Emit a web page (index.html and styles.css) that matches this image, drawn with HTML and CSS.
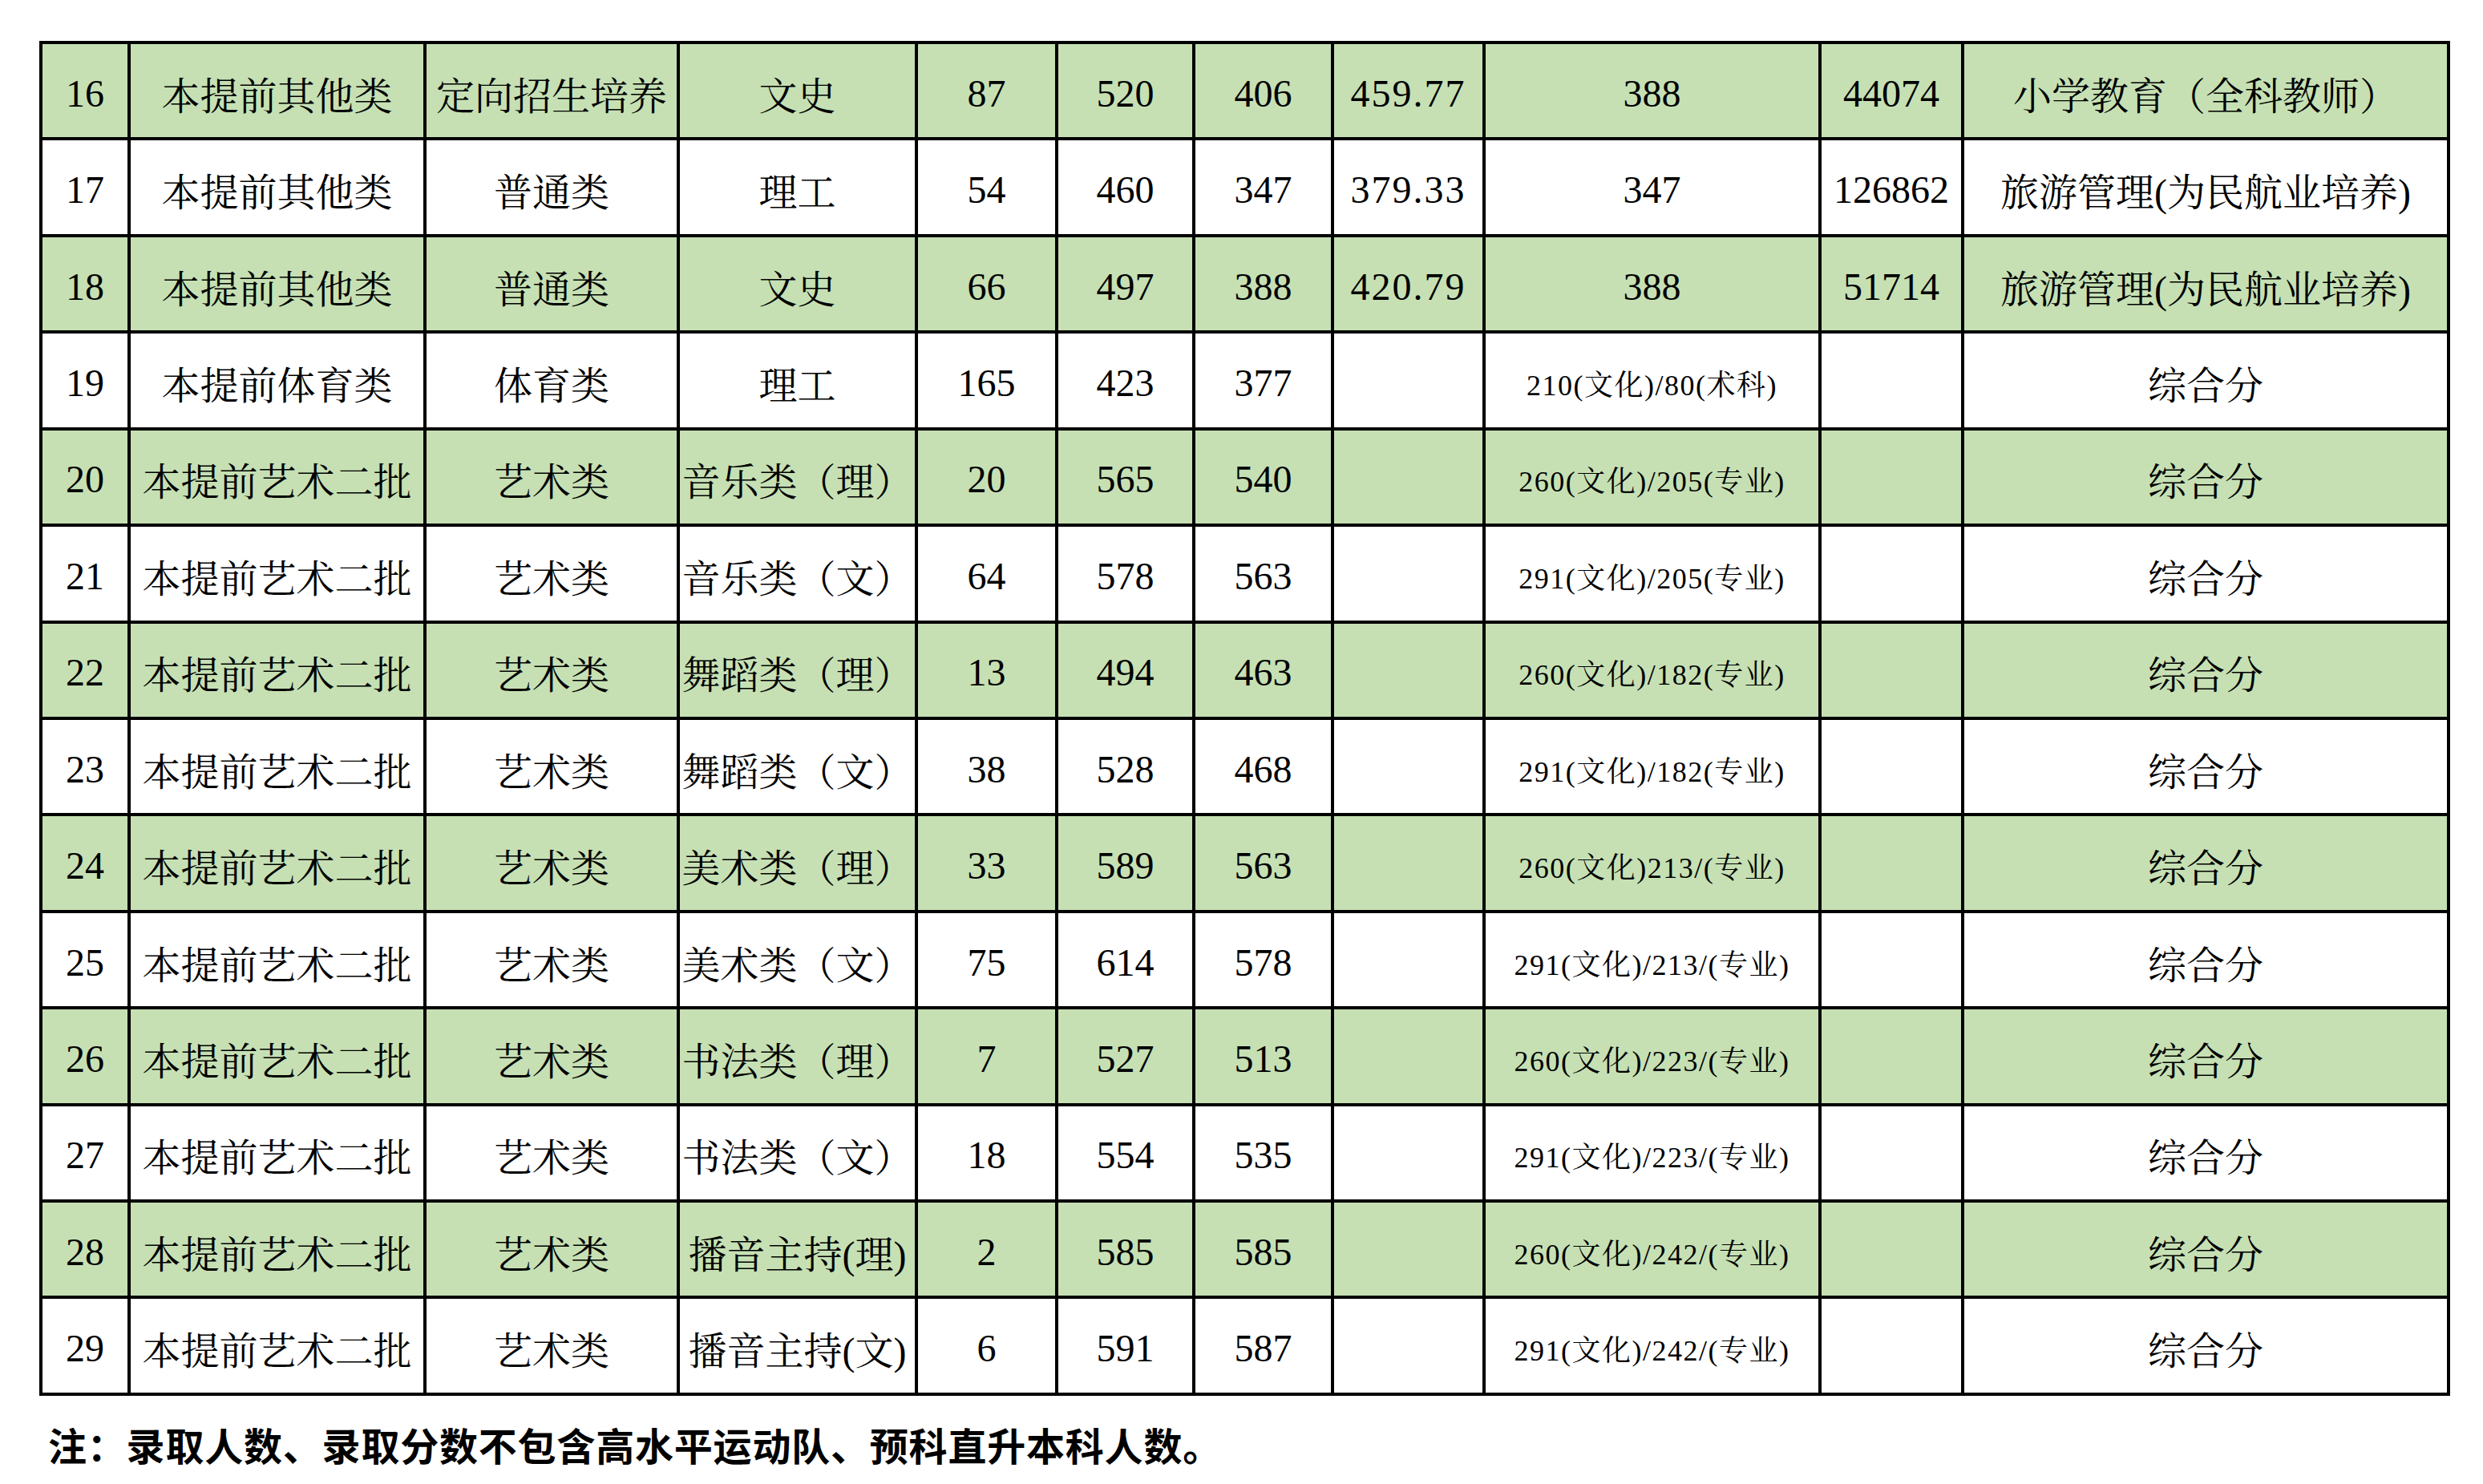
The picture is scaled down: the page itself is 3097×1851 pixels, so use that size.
FILE: index.html
```html
<!DOCTYPE html>
<html lang="zh-CN">
<head>
<meta charset="utf-8">
<title>录取情况</title>
<link rel="stylesheet" href="styles.css">
</head>
<body>
<div class="page">
  <div class="sheet">
    <div class="row green">
      <div class="cell">16</div><div class="cell">本提前其他类</div><div class="cell">定向招生培养</div><div class="cell">文史</div><div class="cell">87</div><div class="cell">520</div><div class="cell">406</div><div class="cell dec">459.77</div><div class="cell">388</div><div class="cell">44074</div><div class="cell">小学教育（全科教师）</div>
    </div>
    <div class="row">
      <div class="cell">17</div><div class="cell">本提前其他类</div><div class="cell">普通类</div><div class="cell">理工</div><div class="cell">54</div><div class="cell">460</div><div class="cell">347</div><div class="cell dec">379.33</div><div class="cell">347</div><div class="cell">126862</div><div class="cell">旅游管理(为民航业培养)</div>
    </div>
    <div class="row green">
      <div class="cell">18</div><div class="cell">本提前其他类</div><div class="cell">普通类</div><div class="cell">文史</div><div class="cell">66</div><div class="cell">497</div><div class="cell">388</div><div class="cell dec">420.79</div><div class="cell">388</div><div class="cell">51714</div><div class="cell">旅游管理(为民航业培养)</div>
    </div>
    <div class="row">
      <div class="cell">19</div><div class="cell">本提前体育类</div><div class="cell">体育类</div><div class="cell">理工</div><div class="cell">165</div><div class="cell">423</div><div class="cell">377</div><div class="cell"></div><div class="cell small">210(文化)/80(术科)</div><div class="cell"></div><div class="cell">综合分</div>
    </div>
    <div class="row green">
      <div class="cell">20</div><div class="cell">本提前艺术二批</div><div class="cell">艺术类</div><div class="cell">音乐类（理）</div><div class="cell">20</div><div class="cell">565</div><div class="cell">540</div><div class="cell"></div><div class="cell small">260(文化)/205(专业)</div><div class="cell"></div><div class="cell">综合分</div>
    </div>
    <div class="row">
      <div class="cell">21</div><div class="cell">本提前艺术二批</div><div class="cell">艺术类</div><div class="cell">音乐类（文）</div><div class="cell">64</div><div class="cell">578</div><div class="cell">563</div><div class="cell"></div><div class="cell small">291(文化)/205(专业)</div><div class="cell"></div><div class="cell">综合分</div>
    </div>
    <div class="row green">
      <div class="cell">22</div><div class="cell">本提前艺术二批</div><div class="cell">艺术类</div><div class="cell">舞蹈类（理）</div><div class="cell">13</div><div class="cell">494</div><div class="cell">463</div><div class="cell"></div><div class="cell small">260(文化)/182(专业)</div><div class="cell"></div><div class="cell">综合分</div>
    </div>
    <div class="row">
      <div class="cell">23</div><div class="cell">本提前艺术二批</div><div class="cell">艺术类</div><div class="cell">舞蹈类（文）</div><div class="cell">38</div><div class="cell">528</div><div class="cell">468</div><div class="cell"></div><div class="cell small">291(文化)/182(专业)</div><div class="cell"></div><div class="cell">综合分</div>
    </div>
    <div class="row green">
      <div class="cell">24</div><div class="cell">本提前艺术二批</div><div class="cell">艺术类</div><div class="cell">美术类（理）</div><div class="cell">33</div><div class="cell">589</div><div class="cell">563</div><div class="cell"></div><div class="cell small">260(文化)213/(专业)</div><div class="cell"></div><div class="cell">综合分</div>
    </div>
    <div class="row">
      <div class="cell">25</div><div class="cell">本提前艺术二批</div><div class="cell">艺术类</div><div class="cell">美术类（文）</div><div class="cell">75</div><div class="cell">614</div><div class="cell">578</div><div class="cell"></div><div class="cell small">291(文化)/213/(专业)</div><div class="cell"></div><div class="cell">综合分</div>
    </div>
    <div class="row green">
      <div class="cell">26</div><div class="cell">本提前艺术二批</div><div class="cell">艺术类</div><div class="cell">书法类（理）</div><div class="cell">7</div><div class="cell">527</div><div class="cell">513</div><div class="cell"></div><div class="cell small">260(文化)/223/(专业)</div><div class="cell"></div><div class="cell">综合分</div>
    </div>
    <div class="row">
      <div class="cell">27</div><div class="cell">本提前艺术二批</div><div class="cell">艺术类</div><div class="cell">书法类（文）</div><div class="cell">18</div><div class="cell">554</div><div class="cell">535</div><div class="cell"></div><div class="cell small">291(文化)/223/(专业)</div><div class="cell"></div><div class="cell">综合分</div>
    </div>
    <div class="row green">
      <div class="cell">28</div><div class="cell">本提前艺术二批</div><div class="cell">艺术类</div><div class="cell">播音主持(理)</div><div class="cell">2</div><div class="cell">585</div><div class="cell">585</div><div class="cell"></div><div class="cell small">260(文化)/242/(专业)</div><div class="cell"></div><div class="cell">综合分</div>
    </div>
    <div class="row">
      <div class="cell">29</div><div class="cell">本提前艺术二批</div><div class="cell">艺术类</div><div class="cell">播音主持(文)</div><div class="cell">6</div><div class="cell">591</div><div class="cell">587</div><div class="cell"></div><div class="cell small">291(文化)/242/(专业)</div><div class="cell"></div><div class="cell">综合分</div>
    </div>
  </div>
  <p class="note">注：录取人数、录取分数不包含高水平运动队、预科直升本科人数。</p>
</div>
</body>
</html>
```

FILE: styles.css
```css
html, body {
  margin: 0;
  padding: 0;
  background: #ffffff;
}

.page {
  padding: 51px 0 0 49px;
}

.sheet {
  display: grid;
  grid-template-columns: 110px 369px 316px 297px 175px 171px 173px 189px 419px 178px 606px;
  grid-auto-rows: 120.43px;
  width: max-content;
  border-left: 4px solid #000;
  border-top: 4px solid #000;
}

.row {
  display: contents;
}

.cell {
  box-sizing: border-box;
  border-right: 4px solid #000;
  border-bottom: 4px solid #000;
  display: flex;
  align-items: center;
  justify-content: center;
  padding-top: 6px;
  white-space: nowrap;
  font-family: "Liberation Serif", "Noto Serif CJK SC", "Noto Sans CJK SC", serif;
  font-size: 48px;
  font-weight: 400;
  color: #000;
  background: #ffffff;
}

.row.green > .cell {
  background: #c6e0b4;
}

.cell.dec {
  letter-spacing: 2px;
}

.cell.small {
  font-size: 36px;
  letter-spacing: 1.5px;
}

.note {
  margin: 32px 0 0 11px;
  font-family: "Noto Sans CJK SC", sans-serif;
  font-size: 48px;
  font-weight: 700;
  line-height: 1.2;
  letter-spacing: 0.8px;
  color: #000;
}
```
